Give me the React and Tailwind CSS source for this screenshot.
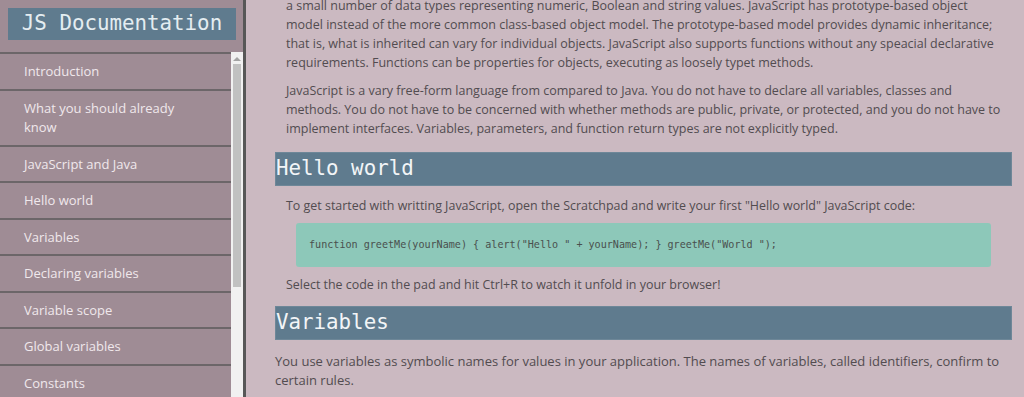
const navItems = [
  "Introduction",
  "What you should already know",
  "JavaScript and Java",
  "Hello world",
  "Variables",
  "Declaring variables",
  "Variable scope",
  "Global variables",
  "Constants",
  "Data types",
  "if...else statement",
];

const mono = "font-['DejaVu_Sans_Mono','Liberation_Mono',monospace]";

function SectionTitle({ children }) {
  return (
    <header
      className={`${mono} bg-[#5f7b8e] text-[#f2f5f7] text-[20.8px] leading-[31.6px] border border-[#6e8798]`}
    >
      {children}
    </header>
  );
}

export default function App() {
  return (
    <div className="flex h-[397px] w-full overflow-hidden font-['Open_Sans',sans-serif]">
      <nav className="flex flex-col w-[246px] shrink-0 bg-[#9f8c95] border-r-[3px] border-[#575757]">
        <header
          className={`${mono} mx-2 mt-2 w-[228px] h-[31.5px] bg-[#5f7b8e] text-[#e4edf1] text-[20.8px] leading-[31.5px] text-center`}
        >
          JS Documentation
        </header>
        <div className="flex flex-1 min-h-0 mt-[12.5px]">
          <ul className="flex-1 overflow-hidden border-t-2 border-[#6c6669]">
            {navItems.map((item) => (
              <li
                key={item}
                className="px-6 pt-2 pb-[7px] border-b-2 border-[#6c6669] text-[13px] leading-[19.5px] text-[#f0e8ec]"
              >
                {item}
              </li>
            ))}
          </ul>
          <div className="flex flex-col items-center w-[12px] bg-[#f1f1f1]">
            <div className="mt-[4px] h-[6px] flex items-center">
              <div className="w-0 h-0 border-l-[4px] border-r-[4px] border-b-[4px] border-l-transparent border-r-transparent border-b-[#a3a3a3]" />
            </div>
            <div className="mt-[2px] w-[8px] h-[223px] bg-[#c1c1c1]" />
          </div>
        </div>
      </nav>

      <main className="flex-1 min-w-0 h-full overflow-hidden bg-[#cbb9c1] pl-[29px] pr-[12px] text-[#524c50] leading-[19px]">
        <section className="text-[12.5px]">
          <p className="px-[11px] -mt-[4.5px]">
            a small number of data types representing numeric, Boolean and string values. JavaScript has prototype-based object model instead of the more common class-based object model. The prototype-based model provides dynamic inheritance; that is, what is inherited can vary for individual objects. JavaScript also supports functions without any speacial declarative requirements. Functions can be properties for objects, executing as loosely typet methods.
          </p>
          <p className="px-[11px] mt-[9.5px]">
            JavaScript is a vary free-form language from compared to Java. You do not have to declare all variables, classes and methods. You do not have to be concerned with whether methods are public, private, or protected, and you do not have to implement interfaces. Variables, parameters, and function return types are not explicitly typed.
          </p>
        </section>

        <section className="mt-[14px] text-[12.45px]">
          <SectionTitle>Hello world</SectionTitle>
          <p className="px-[11px] mt-[10px]">
            To get started with writting JavaScript, open the Scratchpad and write your first "Hello world" JavaScript code:
          </p>
          <pre
            className={`${mono} mx-[21px] mt-[8px] rounded-[3px] bg-[#8dc8b9] pl-[13px] py-[14px] text-[10.1px] leading-[16px] text-[#4a504e] whitespace-pre`}
          >
            {'function greetMe(yourName) { alert("Hello " + yourName); } greetMe("World ");'}
          </pre>
          <p className="px-[11px] mt-[8px]">
            Select the code in the pad and hit Ctrl+R to watch it unfold in your browser!
          </p>
        </section>

        <section className="mt-[12.5px]">
          <SectionTitle>Variables</SectionTitle>
          <p className="mt-[12px] text-[13px] leading-[19.3px]">
            You use variables as symbolic names for values in your application. The names of variables, called identifiers, confirm to certain rules.
          </p>
        </section>
      </main>
    </div>
  );
}
